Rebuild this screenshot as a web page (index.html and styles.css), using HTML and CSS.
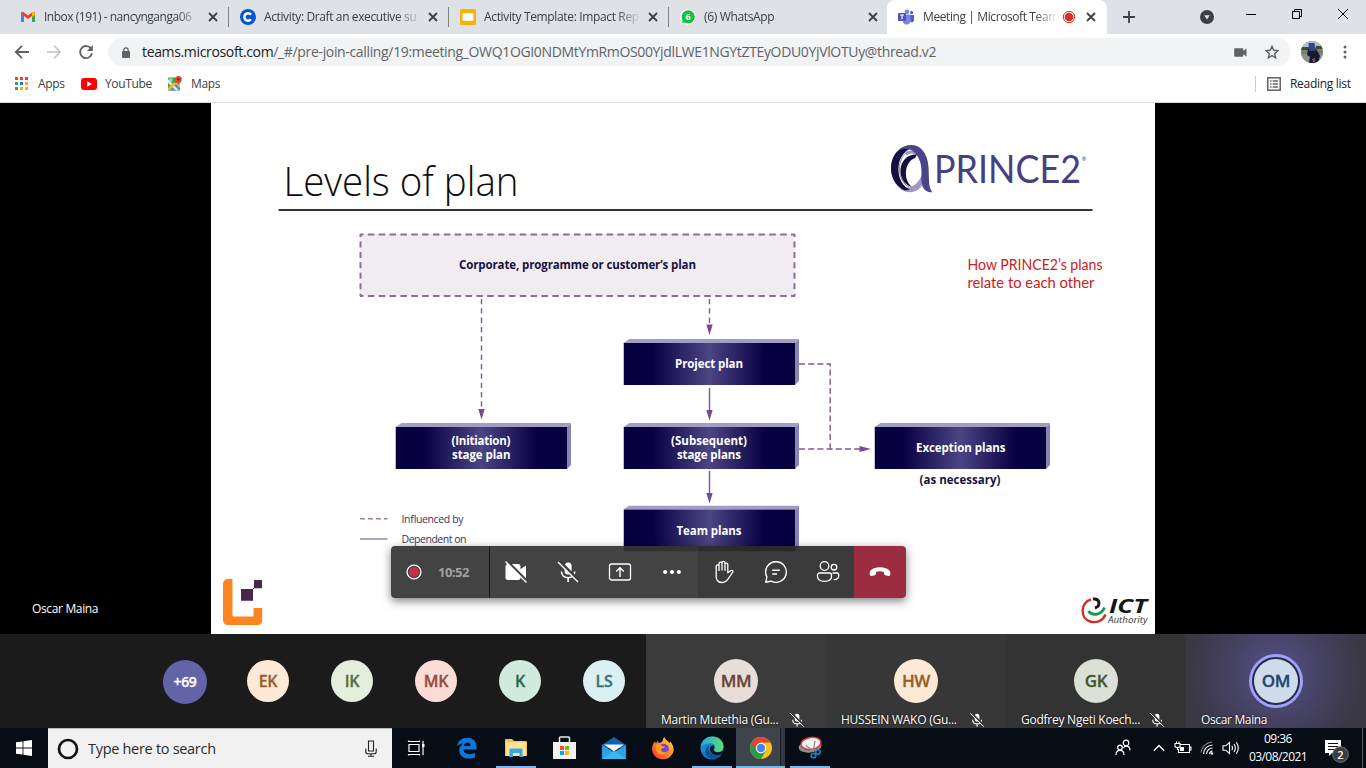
FILE: index.html
```html
<!DOCTYPE html>
<html lang="en">
<head>
<meta charset="utf-8">
<title>Meeting | Microsoft Teams</title>
<link rel="stylesheet" href="styles.css">
</head>
<body>
<svg class="defs" width="0" height="0">
  <defs>
    <symbol id="x" viewBox="0 0 10 10"><path d="M1 1l8 8M9 1l-8 8" stroke="#3c4043" stroke-width="1.8" fill="none"/></symbol>
    <symbol id="micoff" viewBox="0 0 24 24"><rect x="8.6" y="2.5" width="7" height="12" rx="3.5" fill="#fff"/><path d="M5.500 11.500c0 4 3 6.200 6.600 6.200s6.600-2.200 6.600-6.200M12.100 17.700v4.300" fill="none" stroke="#fff" stroke-width="1.600"/><path d="M3.500 1.500l19 19.500" stroke="#3c3c3c" stroke-width="3.500"/><path d="M2 2l20 20" stroke="#fff" stroke-width="1.500"/></symbol>
    <linearGradient id="face"><stop offset="0" stop-color="#06003f"/><stop offset=".17" stop-color="#080043"/><stop offset=".5" stop-color="#4c4584"/><stop offset=".82" stop-color="#080043"/><stop offset="1" stop-color="#06003f"/></linearGradient>
    <symbol id="box" viewBox="0 0 176 46"><path d="M0 4L6 0H175.500L171.500 4z" fill="#a19dc5"/><path d="M171.500 4l4-4v42l-4 4z" fill="#8985b3"/><rect y="4" width="171.500" height="42" fill="url(#face)"/></symbol>
    <linearGradient id="edge1" x1="0" y1="0" x2="1" y2="1"><stop offset="0" stop-color="#1b9de2"/><stop offset="1" stop-color="#0c59a4"/></linearGradient>
    <linearGradient id="edge2"><stop offset="0" stop-color="#1fa8e8"/><stop offset="1" stop-color="#5fe06b"/></linearGradient>
    <linearGradient id="fox" x1="1" y1="0" x2="0" y2="1"><stop offset="0" stop-color="#ffe14a"/><stop offset=".5" stop-color="#ff8a1c"/><stop offset="1" stop-color="#f0254f"/></linearGradient>
  </defs>
</svg>

<header class="tabs">
  <div class="tab">
    <svg class="fav" viewBox="0 0 16 16"><path d="M1 13V4l3 2v7z" fill="#4285f4"/><path d="M12 13V6l3-2v9z" fill="#34a853"/><path d="M1 4.500C1 2.500 2.500 2.500 4 3.500l4 3 4-3c1.500-1 3-1 3 1L12 7l-4 3-4-3z" fill="#ea4335"/><path d="M12 3.500c1.500-1 3-1 3 1V6l-3 2z" fill="#fbbc04"/></svg>
    <span class="title t1">Inbox (191) - nancynganga06</span><svg class="close"><use href="#x"/></svg>
  </div>
  <div class="tab">
    <svg class="fav" viewBox="0 0 16 16"><circle cx="8" cy="8" r="8" fill="#0056d2"/><path d="M11 5.700a3.700 3.700 0 1 0 0 4.600" fill="none" stroke="#fff" stroke-width="2.600"/></svg>
    <span class="title t2">Activity: Draft an executive su</span><svg class="close"><use href="#x"/></svg>
  </div>
  <div class="tab">
    <svg class="fav" viewBox="0 0 16 16"><rect width="16" height="16" rx="1.500" fill="#f9b200"/><rect x="2.500" y="4.200" width="11" height="7.600" fill="#fff"/></svg>
    <span class="title t3">Activity Template: Impact Rep</span><svg class="close"><use href="#x"/></svg>
  </div>
  <div class="tab last">
    <svg class="fav" viewBox="0 0 16 16"><circle cx="8" cy="8" r="7.800" fill="#fff"/><path d="M.5 15.500l1.200-4 3 3z" fill="#fff"/><circle cx="8.200" cy="7.800" r="6.600" fill="#12c140"/><path d="M2 14l.6-3 2.500 2.300z" fill="#12c140"/><text x="8.200" y="11.300" text-anchor="middle" class="six">6</text></svg>
    <span class="title t4">(6) WhatsApp</span><svg class="close"><use href="#x"/></svg>
  </div>
  <div class="tab active">
    <svg class="fav" viewBox="0 0 16 16"><circle cx="9" cy="2.800" r="2.300" fill="#7b83eb"/><circle cx="13.600" cy="3.500" r="1.600" fill="#5059c9"/><path d="M11.500 6H16v5a2.400 2.400 0 0 1-3.500 2z" fill="#5059c9"/><path d="M5 5.500h7.500V12a4 4 0 0 1-7.500 1.500z" fill="#7b83eb"/><rect y="4" width="8" height="8" rx=".8" fill="#4b53bc"/><path d="M2 6h4M4 6v4.500" stroke="#fff" stroke-width="1.200"/></svg>
    <span class="title t5">Meeting | Microsoft Team</span>
    <svg class="rec" viewBox="0 0 14 14"><circle cx="7" cy="7" r="5.700" fill="none" stroke="#d93025" stroke-width="1"/><circle cx="7" cy="7" r="4.300" fill="#d93025"/></svg>
    <svg class="close"><use href="#x"/></svg>
  </div>
  <svg class="plus" viewBox="0 0 12 12"><path d="M6 0v12M0 6h12" stroke="#3c4043" stroke-width="1.800"/></svg>
  <div class="winctl">
    <svg width="14" height="14" viewBox="0 0 14 14"><circle cx="7" cy="7" r="7" fill="#3c4043"/><path d="M4.200 5.200h5.600L7 9.400z" fill="#dee1e6"/></svg>
    <svg width="46" height="28"><path d="M18 14.500h10" stroke="#000"/></svg>
    <svg width="46" height="28"><path d="M18.500 11.500h7v7h-7zM20.500 11.500v-2h7v7h-2" stroke="#000" fill="none"/></svg>
    <svg width="46" height="28"><path d="M18 9l10 10M28 9l-10 10" stroke="#000" fill="none"/></svg>
  </div>
</header>

<div class="toolbar">
  <svg class="nav" viewBox="0 0 16 16"><path d="M15 8H2M8 1.800L1.800 8 8 14.200" fill="none" stroke="#5f6368" stroke-width="1.800"/></svg>
  <svg class="nav" viewBox="0 0 16 16"><path d="M1 8h13M8 1.800L14.200 8 8 14.200" fill="none" stroke="#bdc1c6" stroke-width="1.500"/></svg>
  <svg class="nav" viewBox="0 0 16 16"><path d="M13.400 5.200A6 6 0 1 0 14 9.300" fill="none" stroke="#5f6368" stroke-width="1.900"/><path d="M14.800 1v6H8.800z" fill="#5f6368"/></svg>
  <div class="omni">
    <svg width="8" height="11" viewBox="0 0 8 11"><rect y="4" width="8" height="7" rx="1" fill="#5f6368"/><path d="M1.800 4.500V3a2.200 2.200 0 0 1 4.400 0v1.500" fill="none" stroke="#5f6368" stroke-width="1.200"/></svg>
    <span class="url"><b>teams.microsoft.com</b>/_#/pre-join-calling/19:meeting_OWQ1OGI0NDMtYmRmOS00YjdlLWE1NGYtZTEyODU0YjVlOTUy@thread.v2</span>
    <svg class="cam" width="13" height="9" viewBox="0 0 13 9"><path d="M1 .3h7.500a.8.8 0 0 1 .8.800v1.800L12.500.300v8.400L9.300 6v1.900a.8.800 0 0 1-.8.800H1a.8.800 0 0 1-.8-.8V1.100A.8.800 0 0 1 1 .3z" fill="#5f6368"/></svg>
    <svg class="star" width="14" height="14" viewBox="0 0 14 14"><path d="M7 1.300l1.700 4 4.300.4-3.300 2.900 1 4.300L7 10.600l-3.700 2.300 1-4.300L1 5.700l4.300-.4z" fill="none" stroke="#5f6368" stroke-width="1.400"/></svg>
  </div>
  <svg class="me" width="22" height="22" viewBox="0 0 22 22"><clipPath id="mc"><circle cx="11" cy="11" r="11"/></clipPath><g clip-path="url(#mc)"><path d="M0 0h22v22H0z" fill="#7b8460"/><path d="M0 0h22v6H0z" fill="#b3bed0"/><path d="M0 6h8v3H0zM15 5h7v3h-7z" fill="#3d4a38"/><path d="M0 13h22v9H0z" fill="#8b9194"/><path d="M7 8l7-1 3 4 2 4-2 7H8l1-6-3-2z" fill="#17192c"/><path d="M7.500 2h6l1 8H8z" fill="#35477b"/><path d="M11 18l3-1v4h-2z" fill="#864b45"/></g></svg>
  <svg class="dots" width="4" height="14" viewBox="0 0 4 14"><g fill="#5f6368"><circle cx="2" cy="2" r="1.500"/><circle cx="2" cy="7" r="1.500"/><circle cx="2" cy="12" r="1.500"/></g></svg>
</div>

<nav class="marks">
  <svg width="13" height="13" viewBox="0 0 13 13"><g fill="#ea4335"><path d="M0 0h3v3H0zM5 0h3v3H5zM10 0h3v3h-3z"/></g><path d="M0 5h3v3H0zM0 10h3v3H0z" fill="#34a853"/><path d="M5 5h3v3H5z" fill="#1a73e8"/><path d="M10 5h3v3h-3zM5 10h3v3H5zM10 10h3v3h-3z" fill="#fbaf00"/></svg>
  <span class="m1">Apps</span>
  <svg width="16" height="12" viewBox="0 0 16 12"><rect width="16" height="12" rx="3" fill="#f00"/><path d="M6.200 3.300v5.400L11 6z" fill="#fff"/></svg>
  <span class="m2">YouTube</span>
  <svg width="16" height="15" viewBox="0 0 16 15"><rect x="1" y="1.500" width="12" height="13" rx="1.200" fill="#34a853"/><path d="M1 14.500l7-7 5 7z" fill="#4a8af4"/><path d="M1 3l11 11.500H9L1 7z" fill="#e8eaed"/><path d="M8 7l5 5V6z" fill="#fbc02d"/><path d="M1 12l6-6 2 2-6.500 6.500H1z" fill="#f4b82e"/><circle cx="3.800" cy="4" r="1.300" fill="none" stroke="#fff" stroke-width=".8"/><path d="M11.500 9.500C11 7 8.200 6 8.200 3.300a3.300 3.300 0 0 1 6.600 0C14.800 6 12 7 11.500 9.500z" fill="#ea4335"/><circle cx="11.500" cy="3.300" r="1.200" fill="#8c1d18"/></svg>
  <span class="m3">Maps</span>
  <i class="sep"></i>
  <svg width="14" height="14" viewBox="0 0 14 14"><rect x=".8" y=".8" width="12.400" height="12.400" fill="none" stroke="#5f6368" stroke-width="1.500"/><path d="M3 4h1.500M3 7h1.500M3 10h1.500M5.700 4H11M5.700 7H11M5.700 10H11" stroke="#5f6368" stroke-width="1.300"/></svg>
  <span class="m4">Reading list</span>
</nav>

<main class="stage">
  <div class="side"><span class="speaker">Oscar Maina</span></div>
  <svg class="slide" width="944" height="531" viewBox="211 103 944 531">
    <text x="283.500" y="195.500" class="h1" textLength="235" lengthAdjust="spacingAndGlyphs">Levels of plan</text>
    <path d="M278.500 210h814" stroke="#333336" stroke-width="2"/>
    <path d="M900 186.500c8 3.500 17 0 21.500-11l1 9c-4 8-15 10.500-22.500 4z" fill="#9f98c4"/>
    <path d="M906 154.500c5-5 13-2 15 6" fill="none" stroke="#9f98c4" stroke-width="3"/>
    <path d="M907 147c-20 2-22 36-2 43.500l5-1c-14-5-17-34 1-41z" fill="#14103f"/>
    <path d="M908 151.500c-12 6-11 30 1 35.500" fill="none" stroke="#8f87ba" stroke-width="1"/>
    <path d="M917 154.500c-20-1-22 28-5 32.500-9-7-8-25 3-29z" fill="#14103f"/>
    <path d="M898 150c13-10 29-5 30.500 17 .8 12-.5 20 4 25.300-9 .5-12-6-11-19 .7-14-6-24-15-24.300-3.500-.1-6.500.500-8.500 1z" fill="#4c4488"/>
    <text x="934" y="183" class="prince" textLength="147" lengthAdjust="spacingAndGlyphs">PRINCE2</text>
    <text x="1081.500" y="161" class="reg">®</text>
    <rect x="360" y="234" width="434.500" height="62" fill="#f1ecf1"/>
    <path d="M360 234.500h435M360 296h435" stroke="#8e6c96" stroke-width="2" stroke-dasharray="6.500 4.350" stroke-dashoffset="3"/>
    <path d="M360.500 234v62M794.500 234v62" stroke="#8e6c96" stroke-width="2" stroke-dasharray="6 4.450" stroke-dashoffset="3"/>
    <text x="459" y="269" class="lbl navy" textLength="237">Corporate, programme or customer’s plan</text>
    <g stroke="#7d5a96" stroke-width="1.400" fill="none">
      <path d="M481.500 299v113M709.500 299v26" stroke-dasharray="5.300 4"/>
      <path d="M709.500 388v24M709.500 471v24"/>
      <path d="M799 364h31.200v85" stroke-dasharray="6 3.200"/><path d="M799 449h62" stroke-dasharray="6 3.200"/>
    </g>
    <g fill="#754c90"><path d="M478.300 409h6.400l-3.200 10.500zM706.300 324.500h6.400l-3.200 10.500zM706.300 410h6.400l-3.200 10.500zM706.300 493h6.400l-3.200 10.500zM859.500 446v6l11.500-3z"/></g>
    <use href="#box" x="623.500" y="339" width="176" height="46"/>
    <use href="#box" x="395.500" y="423" width="176" height="46"/>
    <use href="#box" x="623.500" y="423" width="176" height="46"/>
    <use href="#box" x="874.500" y="423" width="176" height="46"/>
    <use href="#box" x="623.500" y="505.500" width="176" height="46"/>
    <g class="lbl white">
      <text x="675" y="367.500" textLength="68">Project plan</text>
      <text x="451.500" y="444.500" textLength="59">(Initiation)</text>
      <text x="452" y="458.500" textLength="58.500">stage plan</text>
      <text x="671" y="444.500" textLength="76">(Subsequent)</text>
      <text x="677" y="458.500" textLength="64">stage plans</text>
      <text x="916" y="452" textLength="89.500">Exception plans</text>
      <text x="676.500" y="534.500" textLength="65">Team plans</text>
    </g>
    <text x="919.500" y="483.500" class="lbl navy" textLength="81">(as necessary)</text>
    <path d="M360 518.700h27.500" stroke="#9c82a9" stroke-width="1.500" stroke-dasharray="5 3"/>
    <path d="M360 539h27.500" stroke="#a08cb4" stroke-width="1.600"/>
    <text x="401.500" y="522.500" class="leg" textLength="62">Influenced by</text>
    <text x="401.500" y="543" class="leg" textLength="65">Dependent on</text>
    <text x="967.500" y="269.700" class="note" textLength="135" lengthAdjust="spacingAndGlyphs">How PRINCE2’s plans</text>
    <text x="967.500" y="288.200" class="note" textLength="127" lengthAdjust="spacingAndGlyphs">relate to each other</text>
    <path d="M232.500 579v36q0 1.500 1.500 1.500h18.500q1 0 1-1V608h8.700v12q0 5-5 5H228.500q-5.500 0-5.500-5.500V584.500q0-5.500 5.500-5.500z" fill="#fb8522"/>
    <path d="M241 589h12v11.700h-12zM254 580h8v8.200h-8z" fill="#4b2450"/><path d="M252 590l3-3" stroke="#4b2450"/>
    <g fill="none" stroke-width="2.400">
      <path d="M1091 599.500c-11 3-11 19-1 22 7 2 13-1 15.500-7" stroke="#d9291f"/>
      <path d="M1088.500 611c3 5 12.500 5 16-3.500" stroke="#169653" stroke-width="2.800"/>
      <path d="M1093 599c7-1 8 7 2 9" stroke="#191919" stroke-width="3"/>
    </g>
    <text x="1109" y="613" class="ict" textLength="38" lengthAdjust="spacingAndGlyphs">ICT</text>
    <text x="1108" y="623" class="auth" textLength="39.500" lengthAdjust="spacingAndGlyphs">Authority</text>
  </svg>
  <div class="callbar">
    <div class="timer"><svg width="16" height="16" viewBox="0 0 16 16"><circle cx="8" cy="8" r="6.900" fill="none" stroke="#fff" stroke-width="1.400"/><circle cx="8" cy="8" r="5" fill="#c4314b"/></svg><span>10:52</span></div>
    <div class="btn"><svg viewBox="0 0 24 24"><rect x="1.500" y="4" width="15" height="16" rx="2.500" fill="#fff"/><path d="M16 9.500L22 5.500v13L16 14.500z" fill="#fff"/><path d="M3.500 1.500l20 20" stroke="#434343" stroke-width="2.500"/><path d="M1.500 1.500l21 21" stroke="#fff" stroke-width="1.300"/></svg></div>
    <div class="btn"><svg viewBox="0 0 24 24"><use href="#micoff"/></svg></div>
    <div class="btn"><svg viewBox="0 0 24 24"><rect x="1.500" y="4" width="21" height="16" rx="2" fill="none" stroke="#fff" stroke-width="1.300"/><path d="M12 17V8M8.200 11.500L12 7.700l3.800 3.800" fill="none" stroke="#fff" stroke-width="1.400"/></svg></div>
    <div class="btn"><svg viewBox="0 0 24 24"><g fill="#fff"><circle cx="5.200" cy="12" r="2.100"/><circle cx="12" cy="12" r="2.100"/><circle cx="18.800" cy="12" r="2.100"/></g></svg></div>
    <div class="btn dk"><svg viewBox="0 0 24 24"><path d="M4.200 13V6.200a1.400 1.400 0 0 1 2.800 0V11M7 11V3.700a1.500 1.500 0 0 1 3 0V10.500M10 10.500V2.800a1.500 1.500 0 0 1 3 0v8M13 10.800V4.500a1.400 1.400 0 0 1 2.800 0v8.300l3.200-2.300c1.500-.6 2.500.8 1.500 2l-4.300 6.300c-2 2.800-3.700 3.700-6.700 3.700-3.500 0-5.300-2.600-5.300-6V13" fill="none" stroke="#fff" stroke-width="1.300" stroke-linejoin="round"/></svg></div>
    <div class="btn dk"><svg viewBox="0 0 24 24"><path d="M12 1.700a10.300 10.300 0 1 1-4.800 19.400L1.800 22.300l1.100-5.400A10.300 10.300 0 0 1 12 1.700zM8.300 10.200h7.400M8.300 14h4.700" fill="none" stroke="#fff" stroke-width="1.400" stroke-linejoin="round"/></svg></div>
    <div class="btn dk"><svg viewBox="0 0 24 24"><g fill="none" stroke="#fff" stroke-width="1.300"><circle cx="8.500" cy="6" r="4.300"/><circle cx="18" cy="7.200" r="2.800"/><path d="M3.500 13h10a2 2 0 0 1 2 2v1.500c0 3-2.500 4.800-7 4.800s-7-1.800-7-4.800V15a2 2 0 0 1 2-2zM16.500 13H21a1.700 1.700 0 0 1 1.700 1.700V16c0 2.500-2 3.800-5 3.600"/></g></svg></div>
    <div class="btn end"><svg viewBox="0 0 24 24"><path d="M12 7.200c4.500 0 8 1.300 9.600 3.500 1 1.400.9 3 .5 4.200-.3.900-1 1.200-1.900 1l-2.800-.7c-.8-.2-1.300-.8-1.400-1.600l-.2-1.700c-2.500-.8-5.100-.8-7.600 0L8 13.600c-.1.800-.6 1.400-1.400 1.600l-2.800.7c-.9.200-1.600-.1-1.900-1-.4-1.200-.5-2.800.5-4.200C4 8.500 7.500 7.200 12 7.200z" fill="#fff"/></svg></div>
  </div>
</main>

<section class="roster">
  <div class="overflow">
    <span class="av more">+69</span><span class="av ek">EK</span><span class="av ik">IK</span><span class="av mk">MK</span><span class="av k">K</span><span class="av ls">LS</span>
  </div>
  <div class="tile a"><span class="av mm">MM</span><p><span class="n1">Martin Mutethia (Gu...</span><svg viewBox="0 0 24 24"><use href="#micoff"/></svg></p></div>
  <div class="tile b"><span class="av hw">HW</span><p><span class="n2">HUSSEIN WAKO (Gu...</span><svg viewBox="0 0 24 24"><use href="#micoff"/></svg></p></div>
  <div class="tile c"><span class="av gk">GK</span><p><span class="n3">Godfrey Ngeti Koech...</span><svg viewBox="0 0 24 24"><use href="#micoff"/></svg></p></div>
  <div class="tile d"><span class="av om">OM</span><p><span class="n4">Oscar Maina</span></p></div>
</section>

<footer class="taskbar">
  <div class="start"><svg width="16" height="16" viewBox="0 0 16 16"><path d="M0 2.300L6.600 1.400v6.200H0zM7.400 1.300L16 0v7.600H7.400zM0 8.400h6.600v6.200L0 13.700zM7.400 8.400H16V16l-8.600-1.300z" fill="#fff"/></svg></div>
  <div class="search"><svg width="22" height="22" viewBox="0 0 22 22"><circle cx="11" cy="11" r="9" fill="none" stroke="#111" stroke-width="2.700"/></svg><span>Type here to search</span>
    <svg width="12" height="17" viewBox="0 0 12 17"><path d="M3.500 1h5v10h-5zM.8 8.500v3.200q0 2 2 2h6.400q2 0 2-2V8.500M6 14v2M3 16.300h6" fill="none" stroke="#222" stroke-width="1.100"/></svg></div>
  <div class="cell tv"><svg width="18" height="18" viewBox="0 0 18 18"><path d="M2 5.500h10v7H2zM1.500 3V1.500M12.500 3V1.500M1.500 2.500h11M1.500 16.500V15M12.500 16.500V15M1.500 15.500h11M16 2v14" fill="none" stroke="#fff" stroke-width="1.200"/><path d="M15 5h2.500v3H15z" fill="#fff"/></svg></div>
  <div class="cell"><svg width="22" height="22" viewBox="0 0 22 22"><path d="M1 9.500C2 4 6 .8 11.200.8c6 0 9.300 4.200 9.300 9.200v2.600H7.500c.3 5 7.500 5.800 11.500 3.200v4.400c-6.500 3-15.500 1.300-15.800-7 0-3.200 1.700-5.500 4.300-6.800C4.300 6.800 2.300 7.500 1 9.500zM7.800 9h6.700c0-4.800-6-4.500-6.700 0z" fill="#0b78d7"/></svg></div>
  <div class="cell on"><svg width="22" height="20" viewBox="0 0 22 20"><path d="M0 2q0-1 1-1h6l2 2h11q2 0 2 1v14H0z" fill="#f5c244"/><path d="M1 4h20v14H1z" fill="#ffe393"/><path d="M4.500 18v-6.500q0-1 1-1h11q1 0 1 1V18h1v1h-4v-4H8v4H4v-1z" fill="#3aa7df"/></svg></div>
  <div class="cell"><svg width="24" height="24" viewBox="0 0 24 24"><path d="M6.500 6V2q0-1 1-1h8q1 0 1 1v4" fill="none" stroke="#eee" stroke-width="1.500"/><path d="M0 6h23v17H0z" fill="#f2f2f2"/><path d="M7 10h4v4H7z" fill="#f25022"/><path d="M12 10h4v4h-4z" fill="#7fba00"/><path d="M7 15h4v4H7z" fill="#00a4ef"/><path d="M12 15h4v4h-4z" fill="#ffb900"/></svg></div>
  <div class="cell"><svg width="24" height="22" viewBox="0 0 24 22"><path d="M0 8l12-8 12 8v3H0z" fill="#0f62b0"/><path d="M0 8v14h24V8l-12 7z" fill="#27a3e8"/><path d="M2 7.500h20l-10 7z" fill="#f4f4f4"/><path d="M0 22l12-8 12 8z" fill="#3bb9f0"/></svg></div>
  <div class="cell"><svg width="24" height="24" viewBox="0 0 24 24"><path d="M13.500 1c.5 3 3.500 3.500 5 6l1-1.500c3 4 4.500 9 1.500 13A11 11 0 0 1 1 13.500C1 10 2 7.500 4 5.500l1 2 2-3 .5 2.500c2-.2 3.500-1 4-2 .5-1.500.5-3 2-4z" fill="url(#fox)"/><circle cx="12.500" cy="13" r="5.300" fill="#7542e5"/><path d="M4.500 9c2-1.500 5-1 6.500 1l3 .5c0 1.500-3.500 1.500-4 3.500 1 3 5 3 7 .5-1 5-9 6-12 0z" fill="#ff9a22"/></svg></div>
  <div class="cell on"><svg width="24" height="24" viewBox="0 0 24 24"><circle cx="12" cy="12" r="11.500" fill="url(#edge1)"/><path d="M1 10C2 4 7 .5 12.500.5 19 .5 23.500 5 23.500 10.500c0 3.500-2.500 5.500-6 5.500-3 0-4-1.500-3-3 2-4-2-6.500-6-5.500C5 8.200 2 9 1 10z" fill="url(#edge2)"/><path d="M9 9.500c-2 5 1 9.500 7 9.500 2 0 4-.7 5.500-1.500-3.500 6-11 7-14.500 2.500-3-4-1-9 2-10.500z" fill="#0d4f98"/><path d="M13.500 9.500c2 2-1 4 .5 5.500 1.500 1.600 5 2 9 .3-.5 2-1.500 2.700-2.500 3.200-5 1.500-10.500-.5-10.500-5.500 0-2 1.500-3.700 3.500-3.500z" fill="#08121b"/></svg></div>
  <div class="cell chrome"><svg width="22" height="22" viewBox="0 0 22 22"><circle cx="11" cy="11" r="11" fill="#fbc116"/><path d="M11 11L1.500 5.500A11 11 0 0 0 11 22l4.800-8.300z" fill="#259b4b"/><path d="M11 5.500h9.500A11 11 0 0 0 1.500 5.500l4.700 8.300z" fill="#e04435"/><circle cx="11" cy="11" r="5.200" fill="#fff"/><circle cx="11" cy="11" r="4.200" fill="#4285f4"/></svg></div>
  <div class="cell on"><svg width="24" height="24" viewBox="0 0 24 24"><ellipse cx="12" cy="10.500" rx="11.500" ry="6" transform="rotate(-8 12 10)" fill="#8e8e92"/><ellipse cx="13" cy="7.500" rx="10" ry="6" transform="rotate(-8 12 7.500)" fill="#f4f4f4" stroke="#d33" stroke-width="1.500"/><path d="M8 9.500l8 6M17 5l-2 11" stroke="#888" stroke-width="1.300"/><circle cx="15.500" cy="19.500" r="2.300" fill="none" stroke="#1c82c9" stroke-width="1.600"/><circle cx="20" cy="16" r="2.300" fill="none" stroke="#1c82c9" stroke-width="1.600"/></svg></div>
  <div class="tray">
    <div class="people"><svg width="16" height="18" viewBox="0 0 16 18"><g fill="none" stroke="#fff" stroke-width="1.200"><circle cx="5" cy="8.500" r="2.300"/><circle cx="11" cy="4" r="2.800"/><path d="M1 16c0-3 1.500-4.600 4-4.600S9 13 9 16M8.500 9c.7-1.300 1.500-1.800 2.700-1.800 2.300 0 3.800 1.600 3.800 4.300"/></g></svg></div>
    <div class="tc"><svg width="12" height="8" viewBox="0 0 12 8"><path d="M.8 6.800L6 1.500l5.200 5.300" fill="none" stroke="#fff" stroke-width="1.300"/></svg></div>
    <div class="tc"><svg width="18" height="14" viewBox="0 0 18 14"><path d="M6 3.500h9.500v8H4.500V8M15.500 6h1.500v3h-1.500M2.500.5v2M5 .5v2M1 2.500h5v3q-2.500 2.500-5 0zM3.500 6v3" fill="none" stroke="#fff" stroke-width="1.100"/><path d="M6 6h4v4H6z" fill="#fff"/></svg></div>
    <div class="tc"><svg width="14" height="14" viewBox="0 0 14 14"><g fill="none" stroke="#fff" stroke-width="1.200"><path d="M1 11.500C1.500 6 6 1.500 12 1" stroke="#888"/><path d="M3.500 13C4 8 7.500 4.500 12.500 4M6.500 13c.3-3 2.500-5.500 6-6M9.500 13c.2-1.500 1.200-2.800 3-3"/></g><circle cx="12" cy="12.500" r="1.300" fill="#fff"/></svg></div>
    <div class="tc"><svg width="18" height="14" viewBox="0 0 18 14"><path d="M1 4.800h2.800L7.500 1.500v11L3.800 9.200H1zM9.800 4.800q1.400 2.200 0 4.400M12 3q2.700 4 0 8M14.300 1.300q4 5.700 0 11.400" fill="none" stroke="#fff" stroke-width="1.100"/></svg></div>
    <div class="clock"><span>09:36</span><span class="date">03/08/2021</span></div>
    <div class="note-ic"><svg width="26" height="26" viewBox="0 0 26 26"><path d="M2 3h16v13h-9l-3 3v-3H2z" fill="#fff"/><path d="M5 6.500h10M5 9.500h10M5 12.500h6" stroke="#0a1016" stroke-width="1.200"/><circle cx="17.500" cy="17.500" r="7.800" fill="#3b3d40" stroke="#75777a" stroke-width="1"/><text x="17.500" y="21.500" text-anchor="middle" class="two">2</text></svg></div>
  </div>
</footer>
</body>
</html>
```
FILE: styles.css
```css
* { box-sizing: border-box; }
body { margin: 0; width: 1366px; height: 768px; overflow: hidden; font: 12px/16px "Open Sans", "Noto Sans", sans-serif; color: #3c4043; background: #fff; }
svg { display: block; flex: none; }
.defs { position: absolute; }

.tabs { display: flex; height: 34px; background: #dee1e6; padding-left: 8px; }
.tab { display: flex; align-items: center; width: 220px; padding: 0 10px 0 12px; position: relative; }
.tab:not(.active):not(.last)::after { content: ""; position: absolute; right: -1px; top: 7px; width: 1px; height: 20px; background: #808388; }
.fav { width: 16px; height: 16px; }
.title { width: 156px; margin-left: 8px; flex: none; white-space: nowrap; letter-spacing: -.35px; -webkit-mask-image: linear-gradient(90deg, #000 132px, transparent 158px); mask-image: linear-gradient(90deg, #000 132px, transparent 158px); }
.t1 { letter-spacing: -.48px; }
.t2 { letter-spacing: -.38px; }
.close { width: 10px; height: 10px; margin-left: 8px; }
.tab.active { padding-left: 11px; margin-left: -1px; background: #fff; border-radius: 8px 8px 0 0; }
.tab.active .title { width: 133px; margin-left: 9px; letter-spacing: -.4px; -webkit-mask-image: linear-gradient(90deg, #000 112px, transparent 135px); mask-image: linear-gradient(90deg, #000 112px, transparent 135px); }
.rec { width: 14px; height: 14px; margin-left: 6px; }
.tab.active .close { margin-left: 10px; }
.plus { width: 12px; height: 12px; margin: 11px 0 0 16px; }
.winctl { margin-left: auto; display: flex; align-items: center; height: 28px; }
.winctl svg:first-child { margin: 6px 14px 0 0; }

.toolbar { display: flex; align-items: center; height: 35px; padding: 2px 0 1px 14px; }
.nav { width: 16px; height: 16px; margin-right: 16px; }
.omni { display: flex; align-items: center; width: 1182px; height: 28px; margin-left: -2px; padding-left: 14px; background: #f1f3f4; border-radius: 14px; }
.url { margin-left: 12px; font-size: 14px; letter-spacing: -.345px; color: #5f6368; white-space: nowrap; }
.url b { font-weight: 400; color: #202124; }
.cam { margin-left: auto; }
.star { margin: 0 11px 0 18px; }
.me { margin-left: 11px; }
.dots { margin-left: 20px; }

.marks { display: flex; align-items: center; height: 34px; padding: 0 15px 4px; border-bottom: 1px solid #dadce0; letter-spacing: -.35px; white-space: nowrap; }
.m1 { width: 43px; margin-left: 10px; }
.m2 { width: 62px; margin-left: 8px; }
.m3 { margin-left: 8px; }
.sep { width: 1px; height: 16px; margin: 0 11px 0 auto; background: #c8cacd; }
.m4 { width: 61px; margin-left: 9px; color: #202124; letter-spacing: -.3px; }

.stage { position: relative; display: flex; height: 531px; background: #000; }
.side { width: 211px; padding: 498px 0 0 32px; color: #fff; }
.speaker { letter-spacing: -.35px; }
.slide { background: #fff; }
.slide text { font-family: "Open Sans", sans-serif; }
.slide .h1 { font: 300 40px "Open Sans", sans-serif; fill: #0c0c0c; }
.slide .prince { font: 400 39px Lato, sans-serif; fill: #463f82; }
.slide .reg { font-size: 6px; fill: #463f82; }
.lbl, .slide .lbl text { font-weight: 700; font-size: 11.500px; }
.navy { fill: #16133f; }
.white { fill: #fff; }
.leg { font-size: 10.500px; fill: #38365c; }
.slide .note { font: 400 14.500px Lato, sans-serif; fill: #cc2118; }
.slide .ict { font: italic 700 20px "Open Sans", sans-serif; fill: #161616; }
.slide .auth { font: italic 400 9.500px "Open Sans", sans-serif; fill: #333; }

.callbar { position: absolute; left: 391px; top: 443px; width: 515px; height: 52px; display: flex; border-radius: 4px; overflow: hidden; box-shadow: 0 3px 10px rgba(0,0,0,.5); }
.timer { display: flex; align-items: center; width: 99px; padding-left: 15px; background: rgba(51,51,51,.92); border-right: 1px solid #1b1b1b; }
.timer span { margin-left: 16px; font-size: 13px; font-weight: 700; letter-spacing: -.5px; color: #a0a0a0; }
.btn { display: grid; place-items: center; width: 52px; background: rgba(51,51,51,.92); }
.btn svg { width: 24px; height: 24px; }
.btn.dk { background: rgba(42,42,42,.92); }
.btn.end { background: #9b2c42; }

.roster { display: flex; height: 94px; background: #1b1b1b; }
.overflow { display: flex; width: 646px; padding: 26px 0 0 163px; }
.av { display: grid; place-items: center; flex: none; width: 42px; height: 42px; margin-right: 42px; border-radius: 50%; font-size: 16px; font-weight: 600; letter-spacing: -.3px; -webkit-text-stroke: .3px currentColor; }
.av:last-child { margin-right: 0; }
.av.more { width: 44px; height: 44px; margin-right: 40px; background: #6264a7; color: #fff; font-size: 14px; }
.ek { background: #fde9d5; color: #96602b; }
.ik { background: #e5eddc; color: #547042; }
.mk { background: #fbdcd6; color: #934c40; }
.k { background: #d0ebdd; color: #246c49; }
.ls { background: #daf0f3; color: #3c6f78; }
.tile { width: 180px; padding-top: 25px; display: flex; flex-direction: column; align-items: center; }
.tile .av { width: 44px; height: 44px; margin: 0; font-size: 17px; }
.tile p { display: flex; align-items: center; align-self: stretch; margin: 9px 0 0; padding-left: 15px; color: #fff; line-height: 16px; text-shadow: 0 0 2px #000; white-space: nowrap; letter-spacing: -.25px; }
.tile p span { width: 128px; }
.tile p .n4 { letter-spacing: -.35px; }
.tile p svg { width: 16px; height: 16px; }
.a { background: #3b3b3b; } .b { background: #373737; } .c { background: #333; }
.d { background: radial-gradient(circle at 90px 40px, #55508a 0, #454160 50px, #3b3846 85px); }
.tile .mm { background: #e9ddd9; color: #65473b; }
.tile .hw { background: #fde9d5; color: #96602b; }
.tile .gk { background: #dbe1d7; color: #40552f; }
.tile .om { background: #cddbea; color: #21456d; box-shadow: 0 0 0 2px #2a2846, 0 0 0 5px #9ea2ff; }

.taskbar { display: flex; height: 40px; background: #060d14; color: #fff; }
.start { width: 48px; display: grid; place-items: center; }
.search { display: flex; align-items: center; width: 344px; padding: 0 15px 0 9px; background: #f1f1f1; border-top: 1px solid #b9b9b9; color: #2b2b2b; font-size: 14.500px; }
.search span { margin: 0 auto 0 9px; letter-spacing: -.3px; }
.cell { display: grid; place-items: center; width: 49px; }
.cell.tv { width: 50px; padding-right: 3px; }
.cell.on { background: linear-gradient(#76b9ed, #76b9ed) 50% 100% / 40px 2px no-repeat; }
.cell.chrome { background: linear-gradient(90deg, #3d444b 44px, #171d23 44px, #171d23 45px, #32383f 45px); border-bottom: 2px solid #76b9ed; padding-top: 2px; }
.tray { display: flex; width: 267px; margin-left: auto; padding-right: 3px; border-right: 1px solid transparent; background: linear-gradient(#55595d, #55595d) 263px 0 / 1px 40px no-repeat; }
.people, .tc, .note-ic { display: grid; place-items: center; }
.people { width: 48px; }
.tc { width: 24px; }
.clock { width: 70px; display: flex; flex-direction: column; align-items: center; padding-top: 2px; line-height: 18px; letter-spacing: -.55px; }
.note-ic { width: 46px; padding-top: 4px; }
.six { font: 700 9px "Open Sans", sans-serif; fill: #fff; }
.two { font: 600 11px "Open Sans", sans-serif; fill: #fff; }
```
